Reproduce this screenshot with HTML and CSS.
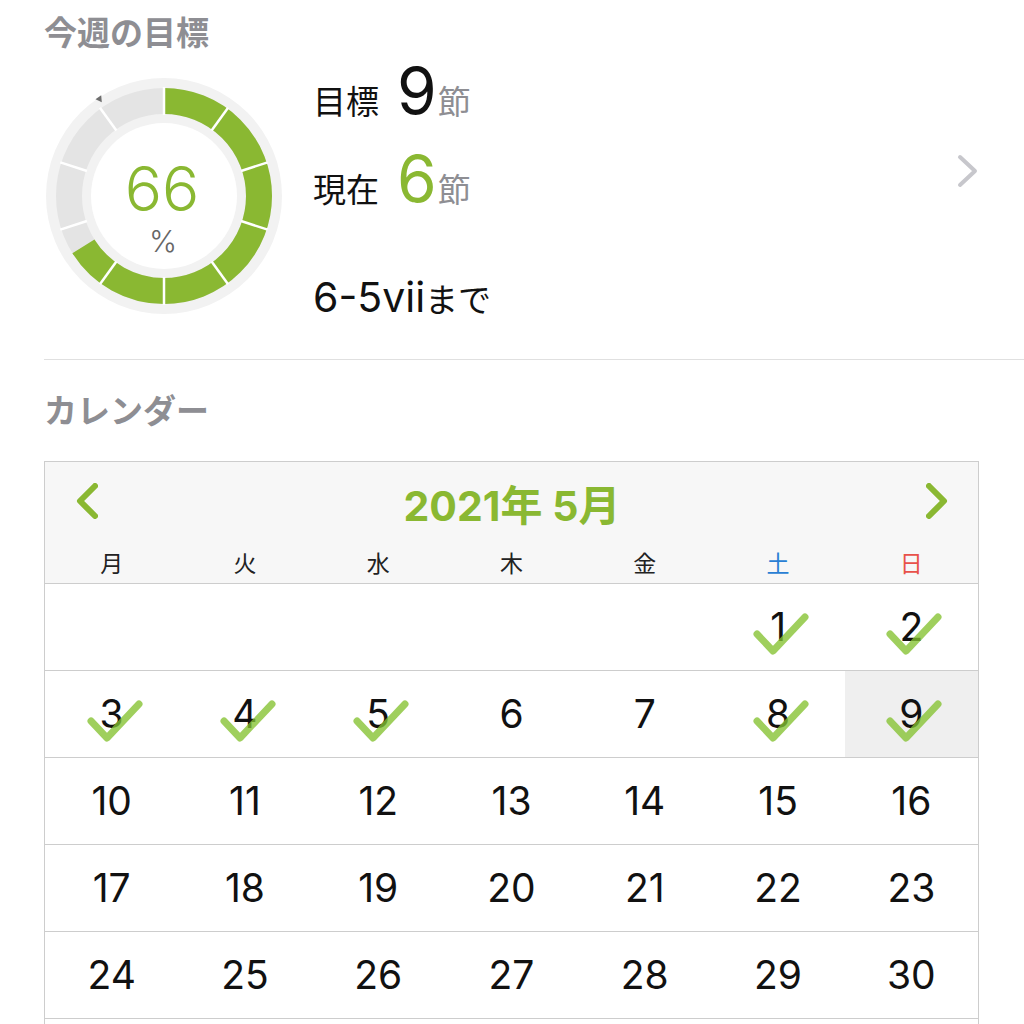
FILE: index.html
```html
<!DOCTYPE html>
<html lang="ja">
<head>
<meta charset="utf-8">
<title>今週の目標</title>
<link rel="stylesheet" href="styles.css">
</head>
<body>
<div class="page">
  <h2 class="title title-goal">今週の目標</h2>
  <div class="goal">
    <svg class="donut" viewBox="0 0 244 244">
      <circle cx="122" cy="122" r="118" fill="#f2f2f2"/>
      <circle cx="122" cy="122" r="95" fill="none" stroke="#e4e4e4" stroke-width="26"/>
      <circle cx="122" cy="122" r="95" fill="none" stroke="#8ab832" stroke-width="26" stroke-dasharray="394 600" transform="rotate(-90 122 122)"/>
      <g stroke="#ffffff" stroke-width="2.5">
        <line x1="122" y1="13" x2="122" y2="41" transform="rotate(0 122 122)"/>
        <line x1="122" y1="13" x2="122" y2="41" transform="rotate(36 122 122)"/>
        <line x1="122" y1="13" x2="122" y2="41" transform="rotate(72 122 122)"/>
        <line x1="122" y1="13" x2="122" y2="41" transform="rotate(108 122 122)"/>
        <line x1="122" y1="13" x2="122" y2="41" transform="rotate(144 122 122)"/>
        <line x1="122" y1="13" x2="122" y2="41" transform="rotate(180 122 122)"/>
        <line x1="122" y1="13" x2="122" y2="41" transform="rotate(216 122 122)"/>
        <line x1="122" y1="13" x2="122" y2="41" transform="rotate(252 122 122)"/>
        <line x1="122" y1="13" x2="122" y2="41" transform="rotate(288 122 122)"/>
        <line x1="122" y1="13" x2="122" y2="41" transform="rotate(324 122 122)"/>
      </g>
      <circle cx="122" cy="122" r="73" fill="#ffffff"/>
      <polygon points="54,23 61,23 57.5,29" fill="#6e6e6e" transform="rotate(-35 57.5 25)"/>
      <text x="120" y="137" text-anchor="middle" class="pct-num">66</text>
      <text x="121" y="178" text-anchor="middle" class="pct-sign">%</text>
    </svg>
    <div class="info">
      <div class="row"><span class="lbl">目標</span><span class="num">9</span><span class="unit">節</span></div>
      <div class="row row-2"><span class="lbl">現在</span><span class="num green">6</span><span class="unit">節</span></div>
      <div class="until"><span class="lat">6-5vii</span><span class="ja">まで</span></div>
    </div>
    <svg class="more" viewBox="0 0 24 36">
      <polyline points="4,4 19,18 4,32" fill="none" stroke="#c7c7cc" stroke-width="4" stroke-linecap="round" stroke-linejoin="round"/>
    </svg>
  </div>
  <div class="divider"></div>
  <h2 class="title title-cal">カレンダー</h2>
  <div class="cal">
    <div class="cal-head">
      <div class="nav">
        <svg class="chev" viewBox="0 0 24 36">
          <polyline points="21,3 6,18 21,33" fill="none" stroke="#8ab832" stroke-width="6" stroke-linecap="round" stroke-linejoin="round"/>
        </svg>
        <div class="nav-title">2021<span class="k">年</span> 5<span class="k">月</span></div>
        <svg class="chev" viewBox="0 0 24 36">
          <polyline points="3,3 18,18 3,33" fill="none" stroke="#8ab832" stroke-width="6" stroke-linecap="round" stroke-linejoin="round"/>
        </svg>
      </div>
      <div class="weekdays">
        <div>月</div><div>火</div><div>水</div><div>木</div><div>金</div><div class="sat">土</div><div class="sun">日</div>
      </div>
    </div>
    <div class="days">
      <div class="day"></div><div class="day"></div><div class="day"></div><div class="day"></div><div class="day"></div>
      <div class="day">1<svg class="check" viewBox="0 0 64 48"><polyline points="7,27 23,44 55,10"/></svg></div>
      <div class="day">2<svg class="check" viewBox="0 0 64 48"><polyline points="7,27 23,44 55,10"/></svg></div>
      <div class="day">3<svg class="check" viewBox="0 0 64 48"><polyline points="7,27 23,44 55,10"/></svg></div>
      <div class="day">4<svg class="check" viewBox="0 0 64 48"><polyline points="7,27 23,44 55,10"/></svg></div>
      <div class="day">5<svg class="check" viewBox="0 0 64 48"><polyline points="7,27 23,44 55,10"/></svg></div>
      <div class="day">6</div>
      <div class="day">7</div>
      <div class="day">8<svg class="check" viewBox="0 0 64 48"><polyline points="7,27 23,44 55,10"/></svg></div>
      <div class="day today">9<svg class="check" viewBox="0 0 64 48"><polyline points="7,27 23,44 55,10"/></svg></div>
      <div class="day">10</div><div class="day">11</div><div class="day">12</div><div class="day">13</div><div class="day">14</div><div class="day">15</div><div class="day">16</div>
      <div class="day">17</div><div class="day">18</div><div class="day">19</div><div class="day">20</div><div class="day">21</div><div class="day">22</div><div class="day">23</div>
      <div class="day">24</div><div class="day">25</div><div class="day">26</div><div class="day">27</div><div class="day">28</div><div class="day">29</div><div class="day">30</div>
    </div>
    <div class="cal-tail"></div>
  </div>
</div>
</body>
</html>
```
FILE: styles.css
```css
html, body {
  margin: 0;
  padding: 0;
  background: #ffffff;
}
body {
  font-family: Inter, "Noto Sans CJK JP", sans-serif;
  color: #111111;
}
.page {
  padding-left: 44px;
}
.title {
  margin: 0;
  font-size: 33px;
  line-height: 40px;
  font-weight: 700;
  color: #8e8e93;
}
.title-goal {
  padding-top: 13px;
}
.goal {
  display: flex;
  align-items: flex-start;
}
.donut {
  flex: none;
  width: 244px;
  height: 244px;
  margin-top: 21px;
  margin-left: -2px;
}
.pct-num {
  font-family: Inter, sans-serif;
  font-weight: 300;
  font-size: 62px;
  fill: #8ab832;
}
.pct-sign {
  font-family: Inter, sans-serif;
  font-weight: 300;
  font-size: 30px;
  fill: #666666;
}
.info {
  margin-left: 27px;
  display: flex;
  flex-direction: column;
}
.row {
  font-size: 64px;
  line-height: 76px;
  white-space: nowrap;
}
.row-2 {
  margin-top: 12px;
}
.lbl {
  font-size: 33px;
  line-height: 1;
  margin-right: 18px;
}
.num {
  font-weight: 400;
}
.green {
  color: #8ab832;
}
.unit {
  font-size: 33px;
  line-height: 1;
  color: #8e8e93;
  margin-left: 1px;
}
.until {
  margin-top: 56px;
  font-size: 41px;
  line-height: 48px;
  white-space: nowrap;
}
.until .ja {
  font-size: 33px;
  line-height: 1;
}
.more {
  flex: none;
  width: 24px;
  height: 36px;
  margin-left: auto;
  margin-right: 44px;
  margin-top: 100px;
}
.divider {
  height: 1px;
  background: #e0e0e0;
  margin-top: 38px;
}
.title-cal {
  margin-top: 31px;
}
.cal {
  margin-top: 30px;
  width: 935px;
  box-sizing: border-box;
  border: 1px solid #cdcdcd;
  border-bottom: none;
}
.cal-head {
  background: #f7f7f7;
  border-bottom: 1px solid #cdcdcd;
}
.nav {
  display: flex;
  align-items: flex-start;
  height: 84px;
  padding-left: 29px;
  padding-right: 28px;
}
.chev {
  flex: none;
  width: 24px;
  height: 36px;
  margin-top: 21px;
}
.nav-title {
  flex: 1;
  text-align: center;
  font-size: 41px;
  line-height: 80px;
  padding-top: 4px;
  font-weight: 700;
  color: #8ab832;
}
.nav-title .k {
  font-size: 42px;
  line-height: 1;
}
.weekdays {
  display: grid;
  grid-template-columns: repeat(7, 1fr);
  height: 37px;
  line-height: 37px;
  font-size: 23px;
  text-align: center;
  color: #222222;
}
.sat {
  color: #2a7fd4;
}
.sun {
  color: #e8524a;
}
.days {
  display: grid;
  grid-template-columns: repeat(7, 1fr);
}
.day {
  position: relative;
  height: 86px;
  line-height: 86px;
  border-bottom: 1px solid #cdcdcd;
  text-align: center;
  font-size: 39px;
  color: #111111;
}
.cal-tail {
  height: 86px;
}
.today {
  background: #efefef;
}
.check {
  position: absolute;
  left: 50%;
  top: 50%;
  width: 64px;
  height: 48px;
  margin-left: -28px;
  margin-top: -20px;
}
.check polyline {
  fill: none;
  stroke: rgba(132, 194, 48, 0.78);
  stroke-width: 7;
  stroke-linecap: round;
  stroke-linejoin: round;
}
```
